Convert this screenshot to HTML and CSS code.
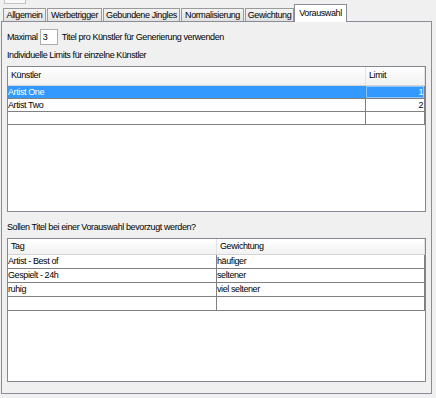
FILE: index.html
```html
<!DOCTYPE html>
<html lang="de">
<head>
    <meta charset="UTF-8">
    <title>Vorauswahl</title>
    <link rel="stylesheet" href="styles.css">
</head>
<body>
    <div class="stub"></div>
    <div class="tabs">
        <div class="tab tab-allgemein">Allgemein</div>
        <div class="tab tab-werbung">Werbetrigger</div>
        <div class="tab tab-jingles">Gebundene Jingles</div>
        <div class="tab tab-normal">Normalisierung</div>
        <div class="tab tab-gewicht">Gewichtung</div>
        <div class="tab tab-vorauswahl active">Vorauswahl</div>
    </div>

    <div class="panel">
        <div class="limit-row">
            <span>Maximal</span>
            <input class="spin" type="text" value="3">
            <span>Titel pro Künstler für Generierung verwenden</span>
        </div>

        <div class="label label-first">Individuelle Limits für einzelne Künstler</div>
        <div class="grid grid-artists">
            <div class="grid-head">
                <div class="head-cell col-artist">Künstler</div>
                <div class="head-cell col-limit">Limit</div>
            </div>
            <div class="grid-row selected">
                <div class="row-cell col-artist">Artist One</div>
                <div class="row-cell col-limit num">1</div>
            </div>
            <div class="grid-row">
                <div class="row-cell col-artist">Artist Two</div>
                <div class="row-cell col-limit num">2</div>
            </div>
            <div class="grid-row">
                <div class="row-cell col-artist"></div>
                <div class="row-cell col-limit num"></div>
            </div>
        </div>

        <div class="label label-second">Sollen Titel bei einer Vorauswahl bevorzugt werden?</div>
        <div class="grid grid-tags">
            <div class="grid-head">
                <div class="head-cell col-tag">Tag</div>
                <div class="head-cell col-weight">Gewichtung</div>
            </div>
            <div class="grid-row">
                <div class="row-cell col-tag">Artist - Best of</div>
                <div class="row-cell col-weight">häufiger</div>
            </div>
            <div class="grid-row">
                <div class="row-cell col-tag">Gespielt - 24h</div>
                <div class="row-cell col-weight">seltener</div>
            </div>
            <div class="grid-row">
                <div class="row-cell col-tag">ruhig</div>
                <div class="row-cell col-weight">viel seltener</div>
            </div>
            <div class="grid-row">
                <div class="row-cell col-tag"></div>
                <div class="row-cell col-weight"></div>
            </div>
        </div>
    </div>
</body>
</html>
```

FILE: styles.css
```css
/* Windows style dialog page: Vorauswahl */
:root {
    --dialog-bg: #f0f0f0;
    --frame-border: #898c95;
    --tab-border: #9a9a9a;
    --grid-border: #828790;
    --grid-line: #808080;
    --select-bg: #3399ff;
}

* {
    box-sizing: border-box;
    margin: 0;
    padding: 0;
}

body {
    width: 436px;
    height: 398px;
    overflow: hidden;
    background-color: var(--dialog-bg);
    color: #000;
    font-family: 'Liberation Sans', Arial, sans-serif;
    font-size: 9px;
    letter-spacing: -0.4px;
}

/* cut off piece of the tab row above */
.stub {
    width: 22px;
    height: 4px;
    margin-left: 4px;
    background: #f8f8f8;
    border: 1px solid #c4c4c4;
    border-top: none;
}

/* Tabs */
.tabs {
    display: flex;
    align-items: flex-end;
    height: 17px;
    padding-left: 3px;
}

.tab {
    height: 13px;
    margin-right: 1px;
    border: 1px solid var(--tab-border);
    border-bottom: none;
    background: linear-gradient(#f4f4f4, #e2e2e2);
    text-align: center;
    line-height: 12px;
    white-space: nowrap;
}

.tab-allgemein { width: 43px; }
.tab-werbung { width: 55px; }
.tab-jingles { width: 77px; }
.tab-normal { width: 63px; }
.tab-gewicht { width: 49px; margin-right: 0; }
.tab-vorauswahl { width: 53px; }

.tab.active {
    position: relative;
    z-index: 1;
    height: 18px;
    margin-bottom: -1px;
    padding-top: 2px;
    background: #fff;
    border-color: var(--frame-border);
}

/* Panel */
.panel {
    width: 431px;
    margin-left: 1px;
    padding: 7px 5px 11px;
    border: 1px solid var(--frame-border);
    background-color: var(--dialog-bg);
}

.limit-row {
    display: flex;
    align-items: center;
    height: 16px;
}

.spin {
    width: 18px;
    height: 16px;
    margin: 0 4px 0 2px;
    padding-left: 2px;
    border: 1px solid #abadb3;
    background: #fff;
    font: inherit;
    color: #000;
    outline: none;
}

.label {
    height: 12px;
    line-height: 12px;
    white-space: nowrap;
}

.label-first {
    margin: 4px 0 5px;
}

.label-second {
    margin: 9px 0 5px;
}

/* Tables */
.grid {
    background: #fff;
    border: 1px solid var(--grid-border);
    overflow: hidden;
}

.grid-artists {
    height: 146px;
}

.grid-tags {
    height: 144px;
}

.grid-head {
    display: flex;
    height: 19px;
    background: linear-gradient(#ffffff, #f2f2f3);
    border-bottom: 1px solid #d5d5d5;
}

.grid-tags .grid-head {
    height: 16px;
}

.head-cell {
    padding-left: 3px;
    line-height: 17px;
    border-right: 1px solid #e2e3e5;
}

.grid-tags .head-cell {
    line-height: 15px;
}

.grid-row {
    display: flex;
    height: 13px;
    border-bottom: 1px solid var(--grid-line);
}

.grid-tags .grid-row {
    height: 14px;
}

.row-cell {
    line-height: 12px;
    border-right: 1px solid var(--grid-line);
    white-space: nowrap;
    overflow: hidden;
}

.grid-tags .row-cell {
    line-height: 13px;
}

.col-artist { width: 358px; }
.col-limit { flex: 1; }
.col-tag { width: 209px; }
.col-weight { flex: 1; }

.num {
    text-align: right;
    padding-right: 1px;
}

.grid-row.selected {
    background: var(--select-bg);
    color: #fff;
}

.grid-row.selected .num {
    box-shadow: inset 0 0 0 1px #8cc4ff;
}
```
